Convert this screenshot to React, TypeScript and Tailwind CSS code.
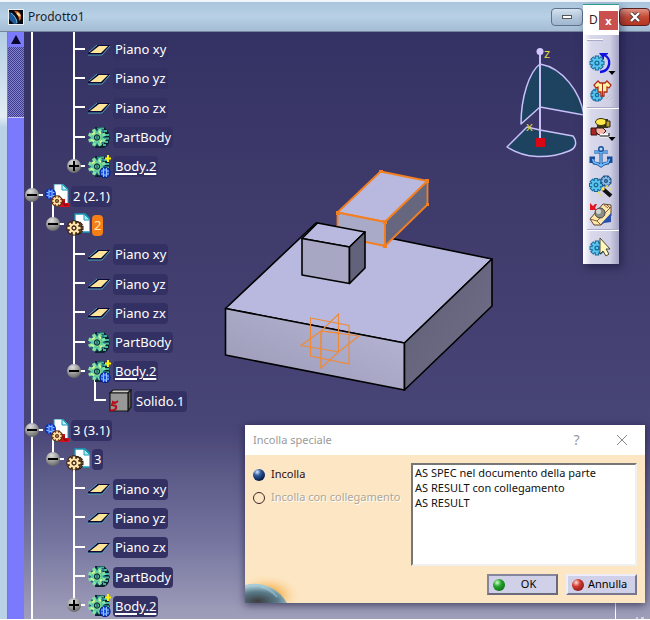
import React from "react";

type IconKind = "plane" | "body" | "boolean" | "product" | "part" | "solid";

type Row = {
  level: number;
  icon: IconKind;
  label: string;
  node?: "plus" | "minus";
  last?: boolean;
  open?: boolean;
  underline?: boolean;
  selected?: boolean;
  // ancestor columns whose vertical line runs through this row
  through: number[];
};

const planes = (): Row[] =>
  ["Piano xy", "Piano yz", "Piano zx"].map((label) => ({ level: 2, icon: "plane" as const, label, through: [0] }));

const partBody = (): Row => ({ level: 2, icon: "body", label: "PartBody", through: [0] });

const rows: Row[] = [
  ...planes(),
  partBody(),
  { level: 2, icon: "boolean", label: "Body.2", node: "plus", last: true, underline: true, through: [0] },
  { level: 0, icon: "product", label: "2 (2.1)", node: "minus", open: true, through: [] },
  { level: 1, icon: "part", label: "2", node: "minus", last: true, open: true, selected: true, through: [0] },
  ...planes(),
  partBody(),
  { level: 2, icon: "boolean", label: "Body.2", node: "minus", last: true, open: true, underline: true, through: [0] },
  { level: 3, icon: "solid", label: "Solido.1", last: true, through: [0] },
  { level: 0, icon: "product", label: "3 (3.1)", node: "minus", open: true, through: [] },
  { level: 1, icon: "part", label: "3", node: "minus", last: true, open: true, through: [0] },
  ...planes(),
  partBody(),
  { level: 2, icon: "boolean", label: "Body.2", node: "plus", last: true, underline: true, through: [0] },
];

function Gear({ x, y, r, fill, edge, hole = edge }: { x: number; y: number; r: number; fill: string; edge: string; hole?: string }) {
  const teeth = [0, 45, 90, 135];
  return (
    <g transform={`translate(${x} ${y})`}>
      {teeth.map((a) => (
        <rect key={`e${a}`} x={-r - 1} y={-2.2} width={2 * r + 2} height={4.4} fill={edge} transform={`rotate(${a})`} />
      ))}
      <circle r={r * 0.8 + 0.6} fill={edge} />
      {teeth.map((a) => (
        <rect key={`f${a}`} x={-r} y={-1.2} width={2 * r} height={2.4} fill={fill} transform={`rotate(${a})`} />
      ))}
      <circle r={r * 0.7} fill={fill} />
      <circle r={r * 0.3} fill="none" stroke={hole} strokeWidth="1.3" />
    </g>
  );
}

function BodyGear() {
  return (
    <g>
      <path d="M8 1H17L20 4L22 7V10L23 12L22 14V17L20 20L17 22H8Z" fill="#0b2330" />
      <path d="M13 2.500h4M17 5h3M18 9h4M18 12.500h4M18 16h3M16 19h3" stroke="#46b39c" strokeWidth="2" />
      <path d="M10 2.500h3M14 5h3M16 9h2M16 13h2M15 17h2" stroke="#2c8198" strokeWidth="2" />
      <g transform="translate(10 11.500)">
        <circle r="8" fill="#1d6f86" />
        {[22, 67, 112, 157].map((a) => (
          <rect key={a} x="-9" y="-1.700" width="18" height="3.400" fill="#84e4a0" transform={`rotate(${a})`} />
        ))}
        <circle r="6" fill="#5cc7a4" />
        <path d="M-5 -3L-2 -5M-6 2L-3 4M2 -6L4 -4M3 5L5 3" stroke="#d9f78e" strokeWidth="1.800" />
        <circle r="4" fill="#8be78f" />
        <circle r="2.600" fill="#5cc7a4" stroke="#0c3240" strokeWidth="1.300" />
        <path d="M0 -2V2" stroke="#0c3240" strokeWidth="1" />
      </g>
    </g>
  );
}

function TreeIcon({ kind }: { kind: IconKind }) {
  return (
    <svg viewBox="0 0 24 24" className="relative block h-6 w-6" aria-hidden="true">
      {kind === "plane" && (
        <g>
          <path d="M1 15L10 7H23L15 17H1Z" fill="#0c0a35" />
          <path d="M1 17H15L23 8M2 14L10 7" fill="none" stroke="#4fa3b8" strokeWidth="1" />
          <path d="M3 15L12 8H21L14 15Z" fill="#ffe59a" />
        </g>
      )}
      {kind === "body" && <BodyGear />}
      {kind === "boolean" && (
        <g>
          <BodyGear />
          <circle cx="18" cy="17.500" r="5.600" fill="#071e8c" />
          <circle cx="18" cy="17.500" r="4.500" fill="#1b4fe0" />
          <path d="M16.500 15v5h3v-5ZM16.500 13v2M19.500 13v2M16.500 20v2M19.500 20v2M14 16h2M14 19h2M20 16h2M20 19h2" fill="none" stroke="#8fc0ff" strokeWidth="1" />
          <path d="M18 3.500h6M21 0v7" stroke="#fff200" strokeWidth="2" />
        </g>
      )}
      {kind === "product" && (
        <g>
          <path d="M9 0h9l5 5v17H9Z" fill="#fff" stroke="#2d8fb0" strokeWidth="1" />
          <path d="M17 0v6h6Z" fill="#baf0f8" stroke="#1798b8" strokeWidth="1" />
          <circle cx="5.500" cy="10" r="5.500" fill="#0a2bb0" />
          <circle cx="5.500" cy="10" r="4" fill="#1b4fe0" />
          <path d="M4 7.500v5h3v-5ZM4 5.500v2M7 5.500v2M4 12.500v2M7 12.500v2M1.500 8.500h2M1.500 11.500h2M7.500 8.500h2M7.500 11.500h2" fill="none" stroke="#8fc0ff" strokeWidth="1" />
          <path d="M15 23v-5h2v-3h3v4h4v4Z" fill="#d4101c" />
          <path d="M19 17v4h4" stroke="#7a0010" fill="none" />
          <Gear x={12} y={17} r={4.600} fill="#ffdfa0" edge="#5b2a10" />
        </g>
      )}
      {kind === "part" && (
        <g>
          <path d="M9 1h10l5 5v13H9Z" fill="#fff" stroke="#189ab5" strokeWidth="1.3" />
          <path d="M18 1v6h6Z" fill="#a9eef8" stroke="#189ab5" />
          <Gear x={10.500} y={15} r={6} fill="#907245" edge="#2b1c12" />
          <Gear x={8} y={15} r={6.600} fill="#ffe3ac" edge="#3b2411" />
        </g>
      )}
      {kind === "solid" && (
        <g stroke="#171717" strokeWidth="1.2">
          <path d="M2 4L5 1H23L20 4Z" fill="#c9c9c9" />
          <path d="M20 4L23 1V18L20 22Z" fill="#5c5c5c" />
          <path d="M2 4H20V22H2Z" fill="#989898" />
          <path d="M10 12L7 14L5 13L4 16L8 17C9 20 6 22 2 21" fill="none" stroke="#b30f18" strokeWidth="2" />
        </g>
      )}
    </svg>
  );
}

function NodeButton({ kind, label }: { kind: "plus" | "minus"; label: string }) {
  return (
    <button
      type="button"
      aria-label={`${kind === "plus" ? "Espandi" : "Comprimi"} ${label}`}
      className="absolute left-[3px] top-1/2 z-10 -mt-2 flex h-3.5 w-3.5 items-center justify-center rounded-full bg-[radial-gradient(circle_at_40%_25%,#dedede,#8c8c8c_55%,#454545)]"
    >
      <span className="absolute h-0.5 w-2.5 bg-black" />
      {kind === "plus" && <span className="absolute h-2.5 w-0.5 bg-black" />}
    </button>
  );
}

function TreeRow({ row }: { row: Row }) {
  return (
    <li className="flex items-center">
      {Array.from({ length: row.level + 1 }, (_, col) => {
        const own = col === row.level;
        return (
          <span key={col} className="relative w-[21px] shrink-0 self-stretch">
            {row.through.includes(col) && <span className="absolute -top-1 bottom-0 left-[9px] w-0.5 bg-white" />}
            {own && (
              <>
                <span className={`absolute -top-1 left-[9px] w-0.5 bg-white ${row.last ? "bottom-1/2" : "bottom-0"}`} />
                <span className="absolute left-[9px] right-0 top-1/2 -mt-0.5 h-0.5 bg-white" />
                {row.node && <NodeButton kind={row.node} label={row.label} />}
              </>
            )}
          </span>
        );
      })}
      <span className="relative mr-1 flex shrink-0 items-center self-stretch pl-0.5">
        {row.open && <span className="absolute bottom-0 left-[9px] top-1/2 w-0.5 bg-white" />}
        <TreeIcon kind={row.icon} />
      </span>
      <span
        className={`-ml-0.5 rounded-sm px-0.5 text-[13px] leading-[21px] ${
          row.selected ? "bg-[#f57f17] text-[#ffe9b0]" : "bg-[#333163] text-white"
        } ${row.underline ? "underline decoration-2 underline-offset-2" : ""}`}
      >
        {row.label}
      </span>
    </li>
  );
}

function Scene() {
  return (
    <svg viewBox="24 32 626 587" className="absolute left-0 top-0 h-[587px] w-[626px]" role="img" aria-label="Vista 3D del prodotto">
      <defs>
        <linearGradient id="front" x1="0" y1="1" x2="1" y2="0">
          <stop offset="0" stopColor="#9897b4" />
          <stop offset="0.6" stopColor="#acabc9" />
          <stop offset="1" stopColor="#b9b9da" />
        </linearGradient>
        <linearGradient id="side" x1="0" y1="0" x2="1" y2="1">
          <stop offset="0" stopColor="#5d5d75" />
          <stop offset="1" stopColor="#727189" />
        </linearGradient>
      </defs>
      <g stroke="#000" strokeWidth="1.6" strokeLinejoin="round">
        <path d="M225.500 308.500L316 223L492 259L404.500 343Z" fill="#b9b9df" />
        <path d="M225.500 308.500L404.500 343V390L225.500 355Z" fill="url(#front)" />
        <path d="M404.500 343L492 259V306L404.500 390Z" fill="url(#side)" />
      </g>
      <g stroke="#f47f20" strokeWidth="1.8" strokeLinejoin="round">
        <path d="M337.500 212.500L380.500 171.500L427.500 181L385 222Z" fill="#b9b9df" />
        <path d="M337.500 212.500L385 222V246L337.500 236Z" fill="#a9a9c8" />
        <path d="M385 222L427.500 181V204.500L385 246Z" fill="#66667f" />
      </g>
      <g fill="#f47f20">
        <path d="M379 170h4v3h-4zM425 179h4v4h-4zM336 211h4v4h-4zM383 220h4v4h-4zM383 244h4v4h-4zM426 203h3v3h-3z" />
      </g>
      <g stroke="#000" strokeWidth="1.6" strokeLinejoin="round">
        <path d="M302 238.500L317.500 223L365 232L349.500 247Z" fill="#b9b9df" />
        <path d="M302 238.500L349.500 247V283.500L302 275Z" fill="#a7a6c3" />
        <path d="M349.500 247L365 232V268L349.500 283.500Z" fill="#62627b" />
      </g>
      <g fill="none" stroke="#f08a35" strokeWidth="1.1">
        <path d="M310.500 318L349 325.500V364L310.500 356Z" />
        <path d="M338.500 314V352L321 368V331Z" />
        <path d="M301 345.500L321 331L359 336L338.500 352Z" />
        <path d="M321 331L338.500 333M321 331V368" />
      </g>
      <g stroke="#c9c0fa" strokeWidth="1.5" strokeLinejoin="round">
        <path d="M540 64C529 72 521 98 521 124L540 107L584 115C580 92 563 68 540 64Z" fill="#1d4360" />
        <path d="M507 147L527 127L540 130L573 136C577 141 577 148 569 151C549 159 525 159 507 147Z" fill="#1d4360" />
        <path d="M540 52V140" strokeWidth="2" />
      </g>
      <circle cx="540" cy="51.500" r="3.500" fill="#d4c6ff" />
      <path d="M536 138h9v9h-9z" fill="#d90613" />
      <text x="544" y="58" fill="#e6d63c" fontSize="13">z</text>
      <text x="526" y="131" fill="#d6cd45" fontSize="13">x</text>
      <path d="M615.500 603V619" stroke="#fff" />
      <path d="M636 618h2M641 618h3" stroke="#fff" />
    </svg>
  );
}

const toolClass = "flex h-[29px] items-center justify-center";

function More() {
  return <path d="M19.500 21h7l-3.500 4z" fill="#000" />;
}

function Tool({ label, children }: { label: string; children: React.ReactNode }) {
  return (
    <button type="button" aria-label={label} className={toolClass}>
      <svg viewBox="0 0 24 24" className="block h-6 w-6 overflow-visible" aria-hidden="true">
        {children}
      </svg>
    </button>
  );
}

function Separator() {
  return <span className="ml-1 h-0.5 border-t border-[#aaaac8] bg-white" />;
}

function Palette() {
  return (
    <aside className="absolute left-[583px] top-1 z-20 w-9 shadow-[3px_4px_8px_rgba(15,14,50,0.5)]">
      <header className="flex h-[31px] items-center justify-between border-t border-[#2e9d8e] bg-white pl-1.5 pr-px">
        <span className="text-[12px] text-[#3a1a1a]">D</span>
        <button type="button" aria-label="Chiudi barra" className="h-[19px] w-[19px] shrink-0 bg-[#c9504f] text-[11px] font-bold leading-[17px] text-white">
          x
        </button>
      </header>
      <div className="flex flex-col bg-[linear-gradient(to_right,#fff,#d9d9ec_22%,#cfcfe5_75%,#a3a3c4)] pb-0.5">
        <span className="ml-1 mt-1 h-0.5 w-4 border-b border-[#aaaac8] bg-white" />
        <div className="flex flex-col pb-0.5 pt-1.5">
          <Tool label="Sostituisci componente">
            <Gear x={8} y={13} r={6.500} fill="#59c4ec" edge="#176a9c" />
            <path d="M15 5C23 8 22 21 11 22" fill="none" stroke="#1010e0" strokeWidth="2.400" />
            <path d="M10 3h9v1l-4 2v4Z" fill="#1010e0" />
            <More />
          </Tool>
          <Tool label="Riordina albero">
            <Gear x={8} y={16} r={5.500} fill="#59c4ec" edge="#176a9c" />
            <path d="M9 2L5 6L7 9L9 8V13H12V17H15V13H18V8L20 9L22 6L18 2L16 4H11Z" fill="#fff3a6" stroke="#b22b16" strokeWidth="1.300" />
            <path d="M13.500 4V17" stroke="#b22b16" strokeWidth="1" />
            <path d="M17 20l5-5M20 21l3-3" stroke="#bcbccc" />
          </Tool>
        </div>
        <Separator />
        <div className="flex flex-col pt-1">
          <Tool label="Vincolo di contatto">
            <path d="M8 3h11v9H8Z" fill="#343620" />
            <ellipse cx="12" cy="6" rx="5.500" ry="3.500" fill="#ffe94a" stroke="#3b3210" />
            <path d="M17 5h4v6h-4Z" fill="#bd9d35" stroke="#2d2710" />
            <path d="M2 12h6v7H2Z" fill="#a82724" stroke="#3a1010" />
            <path d="M7 12h7l3 3-3 3-4 1-3-3Z" fill="#f1b6a8" stroke="#3a1010" />
            <path d="M11 17.500h9v4h-9z" fill="#fff" />
            <path d="M11 20h9M20 17v3" fill="none" stroke="#000" />
            <More />
          </Tool>
          <Tool label="Fissa">
            <path d="M12 5V20M5 7H19M3 13L5 18C8 18 10 19 12 21C14 19 16 18 19 18L21 13M2 18V13H6M22 18V13H18" fill="none" stroke="#164e9b" strokeWidth="3" />
            <path d="M12 5V20M5 7H19M3.500 14L5 17.500C8 18 10 19 12 21C14 19 16 18 19 17.500L20.500 14" fill="none" stroke="#74c0ff" strokeWidth="1.400" />
            <circle cx="12" cy="4" r="2.300" fill="#b9ddff" stroke="#164e9b" strokeWidth="1.400" />
          </Tool>
          <Tool label="Vincolo automatico">
            <Gear x={7} y={11} r={6} fill="#59c4ec" edge="#176a9c" />
            <Gear x={17} y={7} r={4.500} fill="#83bbe4" edge="#204d83" />
            <path d="M14 15L22 22" stroke="#111" strokeWidth="4" />
            <path d="M13 14L15 16" stroke="#ffe84d" strokeWidth="3" />
            <path d="M9 19l2-1M11 22l2-2M17 13l2-2M20 16l2-1" stroke="#e6df55" strokeWidth="1.500" />
          </Tool>
          <Tool label="Catalogo">
            <path d="M1 16L14 1L22 2V13L12 22L5 22Z" fill="#ffe7aa" stroke="#5b4430" />
            <path d="M11 22L22 10V19L15 20Z" fill="#284fac" />
            <path d="M1 16L8 18L12 22M8 18L22 4M15 2l4 3M18 2l3 3" fill="none" stroke="#8b5f3d" />
            <circle cx="11" cy="10" r="5" fill="#8d8d88" stroke="#44433f" />
            <circle cx="9.500" cy="8.500" r="2.500" fill="#d3d3cb" />
            <path d="M1 0v7h7L6 5l2-4H6L4 3Z" fill="#e01721" />
          </Tool>
        </div>
        <Separator />
        <div className="flex flex-col pt-0.5">
          <Tool label="Seleziona">
            <Gear x={8} y={12} r={6.500} fill="#59c4ec" edge="#176a9c" />
            <path d="M11 2V18L14 15L17 20L20 18L17 13H21Z" fill="#fff7bd" stroke="#393523" strokeWidth="0.900" />
          </Tool>
        </div>
      </div>
    </aside>
  );
}

function PasteDialog() {
  return (
    <section role="dialog" aria-labelledby="dialog-title" className="absolute left-[245px] top-[425px] z-20 w-[400px] text-[11px] shadow-[0_2px_8px_rgba(10,10,40,0.6)]">
      <header className="flex h-[30px] items-center bg-white pl-2 text-[#999]">
        <h2 id="dialog-title" className="flex-1">Incolla speciale</h2>
        <button type="button" aria-label="Guida" className="w-[45px] text-sm">?</button>
        <button type="button" aria-label="Chiudi" className="flex w-[46px] justify-center">
          <svg viewBox="0 0 12 12" className="h-3 w-3" aria-hidden="true">
            <path d="M1 1L11 11M11 1L1 11" stroke="#888" strokeWidth="1" />
          </svg>
        </button>
      </header>
      <form className="relative bg-[#fde6c3] px-2 pb-2 pt-2" onSubmit={(e) => e.preventDefault()}>
        <svg viewBox="0 0 56 36" className="absolute bottom-0 left-0 h-9 w-14" aria-hidden="true">
          <defs>
            <radialGradient id="glow" cx="0.4" cy="0.8" r="0.6">
              <stop offset="0.3" stopColor="#f5b04a" />
              <stop offset="1" stopColor="#fde6c3" stopOpacity="0" />
            </radialGradient>
            <radialGradient id="planet" cx="0.3" cy="0.9" r="0.8">
              <stop offset="0" stopColor="#3b3c3e" />
              <stop offset="0.6" stopColor="#5a7b8a" />
              <stop offset="1" stopColor="#a9cbd6" />
            </radialGradient>
          </defs>
          <rect width="56" height="36" fill="url(#glow)" />
          <path d="M0 18C16 14 33 20 42 36H0Z" fill="url(#planet)" />
          <path d="M16 20c6 1 12 5 16 10" stroke="#a8d2e2" strokeWidth="2" strokeOpacity="0.5" fill="none" />
        </svg>
        <div className="flex">
          <fieldset className="w-[158px] shrink-0">
            <label className="flex h-[23px] items-center gap-1.5 whitespace-nowrap text-[#2b0d12]">
              <input type="radio" name="mode" defaultChecked className="h-3 w-3 shrink-0 appearance-none rounded-full bg-[radial-gradient(circle_at_35%_25%,#dceaff,#2f5d9e_30%,#0a214f_70%)]" />
              Incolla
            </label>
            <label className="flex h-[23px] items-center gap-1.5 whitespace-nowrap text-[#aca798] [text-shadow:1px_1px_0_#fff]">
              <input type="radio" name="mode" disabled className="h-3 w-3 shrink-0 appearance-none rounded-full border border-[#3c2a2a]" />
              Incolla con collegamento
            </label>
          </fieldset>
          <select
            size={6}
            aria-label="Formato"
            className="h-[103px] min-w-0 flex-1 overflow-hidden border-2 border-b-[#f0f0f0] border-l-[#777] border-r-[#f0f0f0] border-t-[#777] bg-white bg-none p-0 text-[#111]"
          >
            <option className="h-[15px] p-0 px-0.5 leading-[15px]">AS SPEC nel documento della parte</option>
            <option className="h-[15px] p-0 px-0.5 leading-[15px]">AS RESULT con collegamento</option>
            <option className="h-[15px] p-0 px-0.5 leading-[15px]">AS RESULT</option>
          </select>
        </div>
        <div className="mt-2 flex justify-end gap-2">
          <button type="submit" className="flex h-[21px] w-[71px] items-center border-2 border-[#6a6a7c] border-l-[#85859b] border-t-[#85859b] bg-[#d0d0e8] px-1">
            <span className="h-3 w-3 rounded-full bg-[radial-gradient(circle_at_35%_30%,#d5ffd0,#25a52c_35%,#07560e)]" />
            <span className="flex-1">OK</span>
          </button>
          <button type="button" className="flex h-[21px] w-[71px] items-center gap-1 border-2 border-b-[#77778d] border-l-[#eeeefa] border-r-[#77778d] border-t-[#eeeefa] bg-[#d0d0e8] px-1">
            <span className="h-3 w-3 shrink-0 rounded-full bg-[radial-gradient(circle_at_35%_30%,#ffe0d8,#d03a30_35%,#6d0b0d)]" />
            Annulla
          </button>
        </div>
      </form>
    </section>
  );
}

export default function App() {
  return (
    <div className="relative flex h-screen flex-col overflow-hidden border-b border-white bg-[#b9d0e4] font-['Noto_Sans',sans-serif]">
      <header className="flex h-8 shrink-0 items-center border-b border-t-2 border-b-[#77839a] border-t-[#f2f6fa] bg-[linear-gradient(to_bottom,#a9c5dd,#b8d0e5_50%,#a4bdd5)] pl-2">
        <svg viewBox="0 0 16 16" className="mr-1 h-4 w-4" aria-hidden="true">
          <path d="M0 0h16v16H0z" fill="#eee" />
          <path d="M1 1h14v14H1z" fill="#080a12" />
          <path d="M1 3C5 4 9 9 9 15H6L1 10Z" fill="#1d5a9a" />
          <path d="M3 4C6 6 9 10 9 14" stroke="#7ab8e0" fill="none" />
          <path d="M6 2C11 1 14 5 13 10L11 12C11 7 9 5 6 2Z" fill="#c9652a" />
          <path d="M9 4L12 7" stroke="#ffe5a7" strokeWidth="2" />
        </svg>
        <h1 className="flex-1 text-[12px] text-[#1b1f2a]">Prodotto1</h1>
        <button type="button" aria-label="Riduci a icona" className="flex h-[18px] w-8 items-center justify-center rounded-sm border border-[#60728a] bg-[linear-gradient(to_bottom,#d4e2ef,#b5c8dc_50%,#9fb7cf)]">
          <span className="h-1 w-2.5 border border-[#555] bg-white" />
        </button>
        <button type="button" aria-label="Chiudi finestra" className="ml-9 flex h-[18px] w-[31px] items-center justify-center rounded-sm border border-[#5a2020] bg-[linear-gradient(to_bottom,#dc9284,#c44a36_50%,#b43522)]">
          <svg viewBox="0 0 12 10" className="h-2.5 w-3" aria-hidden="true">
            <path d="M2 1L10 9M10 1L2 9" stroke="#4b3838" strokeWidth="4" />
            <path d="M2 1L10 9M10 1L2 9" stroke="#fff" strokeWidth="2.400" />
          </svg>
        </button>
      </header>
      <main className="flex min-h-0 flex-1">
        <div className="w-2 shrink-0 border-r border-[#77839a] bg-[linear-gradient(to_bottom,#b3cde4,#e3edf4_85px,#b9d2e6_95px)]" />
        <div className="flex w-4 shrink-0 flex-col bg-[#7b79fc]">
          <button type="button" aria-label="Scorri in alto" className="flex h-[15px] items-center justify-center">
            <svg viewBox="0 0 10 9" className="h-[9px] w-2.5" aria-hidden="true">
              <path d="M5 0L10 9H0Z" fill="#08082c" />
            </svg>
          </button>
          <div className="h-[71px] border-b border-[#c9c8f6] bg-[repeating-conic-gradient(#403d88_0_25%,#8180d2_0_50%)] bg-[length:2px_2px]" />
        </div>
        <div className="relative min-w-0 flex-1 overflow-hidden bg-[linear-gradient(to_bottom,#343264,#3e3b6b_160px,#484577_395px,#5b5986_440px,#7675a0_510px,#a09fba_587px)]">
          <Scene />
          <ul className="relative -ml-0.5 grid h-[589px] auto-rows-fr pt-[3px]">
            {rows.map((row, i) => (
              <TreeRow key={i} row={row} />
            ))}
          </ul>
        </div>
      </main>
      <Palette />
      <PasteDialog />
    </div>
  );
}
